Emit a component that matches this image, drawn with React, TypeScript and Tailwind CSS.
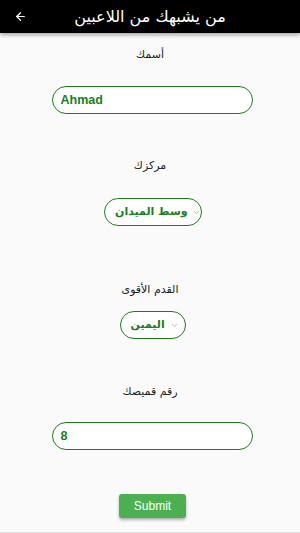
import { ArrowLeft, ChevronDown } from "lucide-react";

const arabic = { fontFamily: '"DejaVu Sans", "Noto Sans", sans-serif' };
const latin = { fontFamily: '"Liberation Sans", Arial, sans-serif' };

function Label({ text, className }: { text: string; className: string }) {
  return (
    <p dir="rtl" style={arabic} className={`h-4 text-[11px] leading-4 text-[#222] ${className}`}>
      {text}
    </p>
  );
}

function Select({ value, width, className }: { value: string; width: string; className: string }) {
  return (
    <div
      className={`flex h-[28px] items-center justify-between gap-[4px] rounded-full border-[1.5px] border-[#1b7d1b] bg-white pl-[10px] pr-[6px] ${width} ${className}`}
    >
      <span dir="rtl" style={arabic} className="whitespace-nowrap text-[11px] font-bold text-[#1b7d1b]">
        {value}
      </span>
      <ChevronDown className="h-[9px] w-[9px] shrink-0 text-[#888]" strokeWidth={1.5} />
    </div>
  );
}

function TextInput({ value, className }: { value: string; className: string }) {
  return (
    <div
      className={`ml-[4px] flex h-[28px] w-[201px] items-center rounded-full border-[1.5px] border-[#1b7d1b] bg-white px-[8px] ${className}`}
    >
      <span style={latin} className="text-[12.5px] font-bold text-[#1b7d1b]">
        {value}
      </span>
    </div>
  );
}

export default function App() {
  return (
    <div className="flex h-[533px] w-[300px] flex-col overflow-hidden bg-[#fafafa]">
      <header className="relative z-10 grid h-[33px] shrink-0 grid-cols-[40px_1fr_40px] items-center bg-black shadow-[0_2px_4px_rgba(0,0,0,0.35)]">
        <ArrowLeft className="ml-[14px] h-[13px] w-[13px] text-white" strokeWidth={2.2} />
        <h1 dir="rtl" style={arabic} className="text-center text-[16px] text-white">
          من يشبهك من اللاعبين
        </h1>
        <span />
      </header>

      <main className="flex flex-1 flex-col items-center border-b border-[#e2e2e2]">
        <Label text="أسمك" className="mt-[14px]" />
        <TextInput value="Ahmad" className="mt-[23px]" />

        <Label text="مركزك" className="mt-[44px]" />
        <Select value="وسط الميدان" width="w-[98px]" className="ml-[6px] mt-[24px]" />

        <Label text="القدم الأقوى" className="mt-[56px]" />
        <Select value="اليمين" width="w-[66px]" className="ml-[5px] mt-[13px]" />

        <Label text="رقم قميصك" className="mt-[45px]" />
        <TextInput value="8" className="mt-[22px]" />

        <button
          style={latin}
          className="ml-[5px] mt-[44px] h-[24px] w-[67px] rounded-[3px] bg-[#4caf50] text-[12px] text-white shadow-[0_2px_3px_rgba(0,0,0,0.3)]"
        >
          Submit
        </button>
      </main>
    </div>
  );
}
